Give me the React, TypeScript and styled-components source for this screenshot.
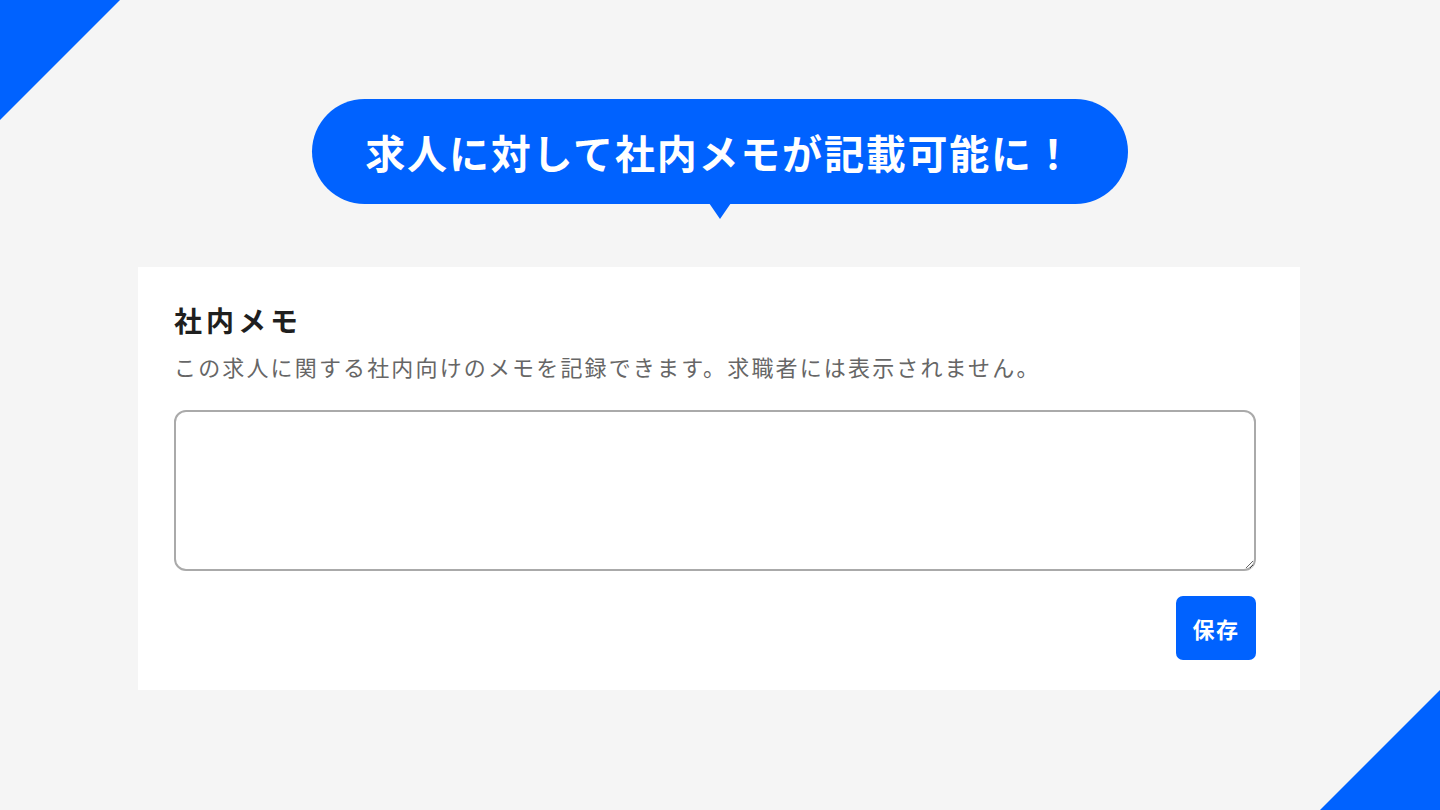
import React from "react";
import styled, { createGlobalStyle } from "styled-components";

const Global = createGlobalStyle`
  html, body { margin: 0; padding: 0; }
  body {
    background: #f5f5f5;
    font-family: "Noto Sans CJK JP", "Noto Sans", sans-serif;
  }
`;

const BLUE = "#0062ff";

const Page = styled.div`
  position: relative;
  width: 1440px;
  height: 810px;
  overflow: hidden;
  background: #f5f5f5;
  display: flex;
  flex-direction: column;
  align-items: center;
  padding: 99px 2px 0 0;
  box-sizing: border-box;
`;

const Corner = styled.div<{ $pos: "tl" | "br" }>`
  position: absolute;
  width: 120px;
  height: 120px;
  background: ${BLUE};
  ${(p) =>
    p.$pos === "tl"
      ? `top: 0; left: 0; clip-path: polygon(0 0, 100% 0, 0 100%);`
      : `bottom: 0; right: 0; clip-path: polygon(100% 0, 100% 100%, 0 100%);`}
`;

const Bubble = styled.div`
  position: relative;
  width: 816px;
  height: 105px;
  margin-left: 2px;
  border-radius: 53px;
  background: ${BLUE};
  color: #fff;
  display: flex;
  align-items: center;
  justify-content: center;
  font-size: 40px;
  font-weight: 700;
  letter-spacing: 1.8px;
  &::after {
    content: "";
    position: absolute;
    left: 50%;
    bottom: -15px;
    transform: translateX(-50%);
    width: 22px;
    height: 16px;
    background: ${BLUE};
    clip-path: polygon(0 0, 100% 0, 50% 100%);
  }
`;

const Card = styled.section`
  margin-top: 63px;
  width: 1162px;
  background: #fff;
  box-sizing: border-box;
  padding: 33px 44px 30px 36px;
  display: flex;
  flex-direction: column;
`;

const Title = styled.h2`
  margin: 0;
  font-size: 28px;
  line-height: 40px;
  font-weight: 700;
  color: #1f1f1f;
  letter-spacing: 4px;
`;

const Desc = styled.p`
  margin: 10px 0 0;
  font-size: 22px;
  line-height: 32px;
  color: #666;
  letter-spacing: 2.15px;
`;

const Memo = styled.textarea`
  margin-top: 28px;
  height: 161px;
  width: 100%;
  box-sizing: border-box;
  border: 2px solid #aaa;
  border-radius: 12px;
  background: #fff;
  font-family: inherit;
  font-size: 18px;
  padding: 12px;
  outline: none;
`;

const Actions = styled.div`
  margin-top: 25px;
  display: flex;
  justify-content: flex-end;
`;

const SaveButton = styled.button`
  width: 80px;
  height: 64px;
  border: none;
  border-radius: 7px;
  background: ${BLUE};
  color: #fff;
  font-family: inherit;
  font-size: 22px;
  font-weight: 700;
  letter-spacing: 1.5px;
  cursor: pointer;
`;

export default function App() {
  return (
    <>
      <Global />
      <Page>
        <Corner $pos="tl" />
        <Corner $pos="br" />
        <Bubble>求人に対して社内メモが記載可能に！</Bubble>
        <Card>
          <Title>社内メモ</Title>
          <Desc>この求人に関する社内向けのメモを記録できます。求職者には表示されません。</Desc>
          <Memo />
          <Actions>
            <SaveButton>保存</SaveButton>
          </Actions>
        </Card>
      </Page>
    </>
  );
}
